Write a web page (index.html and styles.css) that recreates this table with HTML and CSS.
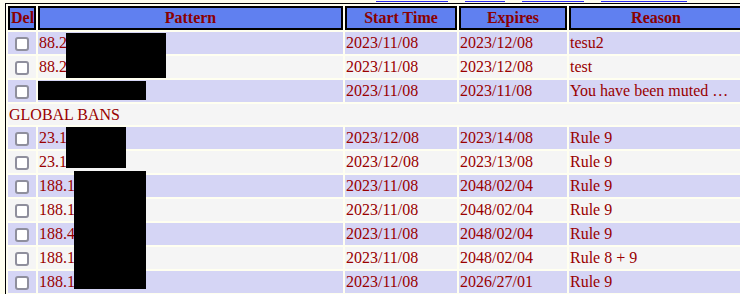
FILE: index.html
```html
<!DOCTYPE html>
<html lang="en">
<head>
<meta charset="utf-8">
<title>Bans</title>
<link rel="stylesheet" href="styles.css">
</head>
<body>
<div class="nav">
  <span class="navlink w1"></span>
  <span class="navlink w2"></span>
  <span class="navlink w3"></span>
  <span class="navlink w4"></span>
</div>
<table class="bans">
  <thead>
    <tr>
      <th class="c-del">Del</th>
      <th class="c-pat">Pattern</th>
      <th class="c-start">Start Time</th>
      <th class="c-exp">Expires</th>
      <th class="c-reason">Reason</th>
    </tr>
  </thead>
  <tbody>
    <tr class="odd">
      <td class="del"><input type="checkbox"></td>
      <td class="pat">88.2<span class="redact r1"></span></td>
      <td>2023/11/08</td>
      <td>2023/12/08</td>
      <td>tesu2</td>
    </tr>
    <tr class="even">
      <td class="del"><input type="checkbox"></td>
      <td class="pat">88.2</td>
      <td>2023/11/08</td>
      <td>2023/12/08</td>
      <td>test</td>
    </tr>
    <tr class="odd">
      <td class="del"><input type="checkbox"></td>
      <td class="pat"><span class="redact r2"></span></td>
      <td>2023/11/08</td>
      <td>2023/11/08</td>
      <td>You have been muted …</td>
    </tr>
    <tr class="section">
      <td colspan="5">GLOBAL BANS</td>
    </tr>
    <tr class="odd">
      <td class="del"><input type="checkbox"></td>
      <td class="pat">23.1<span class="redact r3"></span></td>
      <td>2023/12/08</td>
      <td>2023/14/08</td>
      <td>Rule 9</td>
    </tr>
    <tr class="even">
      <td class="del"><input type="checkbox"></td>
      <td class="pat">23.1</td>
      <td>2023/12/08</td>
      <td>2023/13/08</td>
      <td>Rule 9</td>
    </tr>
    <tr class="odd">
      <td class="del"><input type="checkbox"></td>
      <td class="pat">188.1<span class="redact r4"></span></td>
      <td>2023/11/08</td>
      <td>2048/02/04</td>
      <td>Rule 9</td>
    </tr>
    <tr class="even">
      <td class="del"><input type="checkbox"></td>
      <td class="pat">188.1</td>
      <td>2023/11/08</td>
      <td>2048/02/04</td>
      <td>Rule 9</td>
    </tr>
    <tr class="odd">
      <td class="del"><input type="checkbox"></td>
      <td class="pat">188.4</td>
      <td>2023/11/08</td>
      <td>2048/02/04</td>
      <td>Rule 9</td>
    </tr>
    <tr class="even">
      <td class="del"><input type="checkbox"></td>
      <td class="pat">188.1</td>
      <td>2023/11/08</td>
      <td>2048/02/04</td>
      <td>Rule 8 + 9</td>
    </tr>
    <tr class="odd">
      <td class="del"><input type="checkbox"></td>
      <td class="pat">188.1</td>
      <td>2023/11/08</td>
      <td>2026/27/01</td>
      <td>Rule 9</td>
    </tr>
  </tbody>
</table>
</body>
</html>
```
FILE: styles.css
```css
html {
  overflow: hidden;
  background: #fffff0;
}

body {
  margin: 0;
  padding: 0 0 0 5px;
  background: #fffff0;
  font-family: "Liberation Serif", "Times New Roman", serif;
  font-size: 16px;
  color: #990000;
}

.nav {
  display: flex;
  height: 3px;
}

.navlink {
  display: block;
  height: 1px;
  border-bottom: 1px solid #2a2af0;
}

.w1 { width: 72px; margin-left: 371px; }
.w2 { width: 40px; margin-left: 17px; }
.w3 { width: 62px; margin-left: 17px; }
.w4 { width: 86px; margin-left: 17px; }

.bans {
  border: 1px solid #000;
  border-collapse: separate;
  border-spacing: 2px;
  table-layout: fixed;
  width: 741px;
}

.bans th {
  box-sizing: border-box;
  background: #6080f0;
  color: #8b0000;
  font-weight: bold;
  border: 2px solid #000;
  padding: 1px;
  height: 24px;
  line-height: 18px;
  text-align: center;
  white-space: nowrap;
  overflow: hidden;
}

.c-del { width: 28px; }
.c-pat { width: 305px; }
.c-start { width: 112px; }
.c-exp { width: 108px; }
.c-reason { width: 174px; }

.bans td {
  box-sizing: border-box;
  height: 22px;
  padding: 1px;
  line-height: 18px;
  white-space: nowrap;
  vertical-align: middle;
}

.odd td { background: #d5d5f5; }
.even td { background: #f5f5f5; }
.section td {
  background: #f5f5f5;
  height: 21px;
}

.del {
  text-align: center;
}

.del input {
  appearance: none;
  -webkit-appearance: none;
  box-sizing: border-box;
  display: inline-block;
  width: 14px;
  height: 14px;
  margin: 0;
  border: 2px solid #8f8f9d;
  border-radius: 3px;
  background: #ffffff;
  vertical-align: middle;
}

.pat {
  position: relative;
}

.redact {
  position: absolute;
  z-index: 1;
  background: #000;
}

.r1 { left: 28px; top: 1px; width: 100px; height: 45px; }
.r2 { left: 0; top: 1px; width: 108px; height: 19px; }
.r3 { left: 28px; top: 0; width: 60px; height: 41px; }
.r4 { left: 36px; top: -4px; width: 72px; height: 118px; }
```
